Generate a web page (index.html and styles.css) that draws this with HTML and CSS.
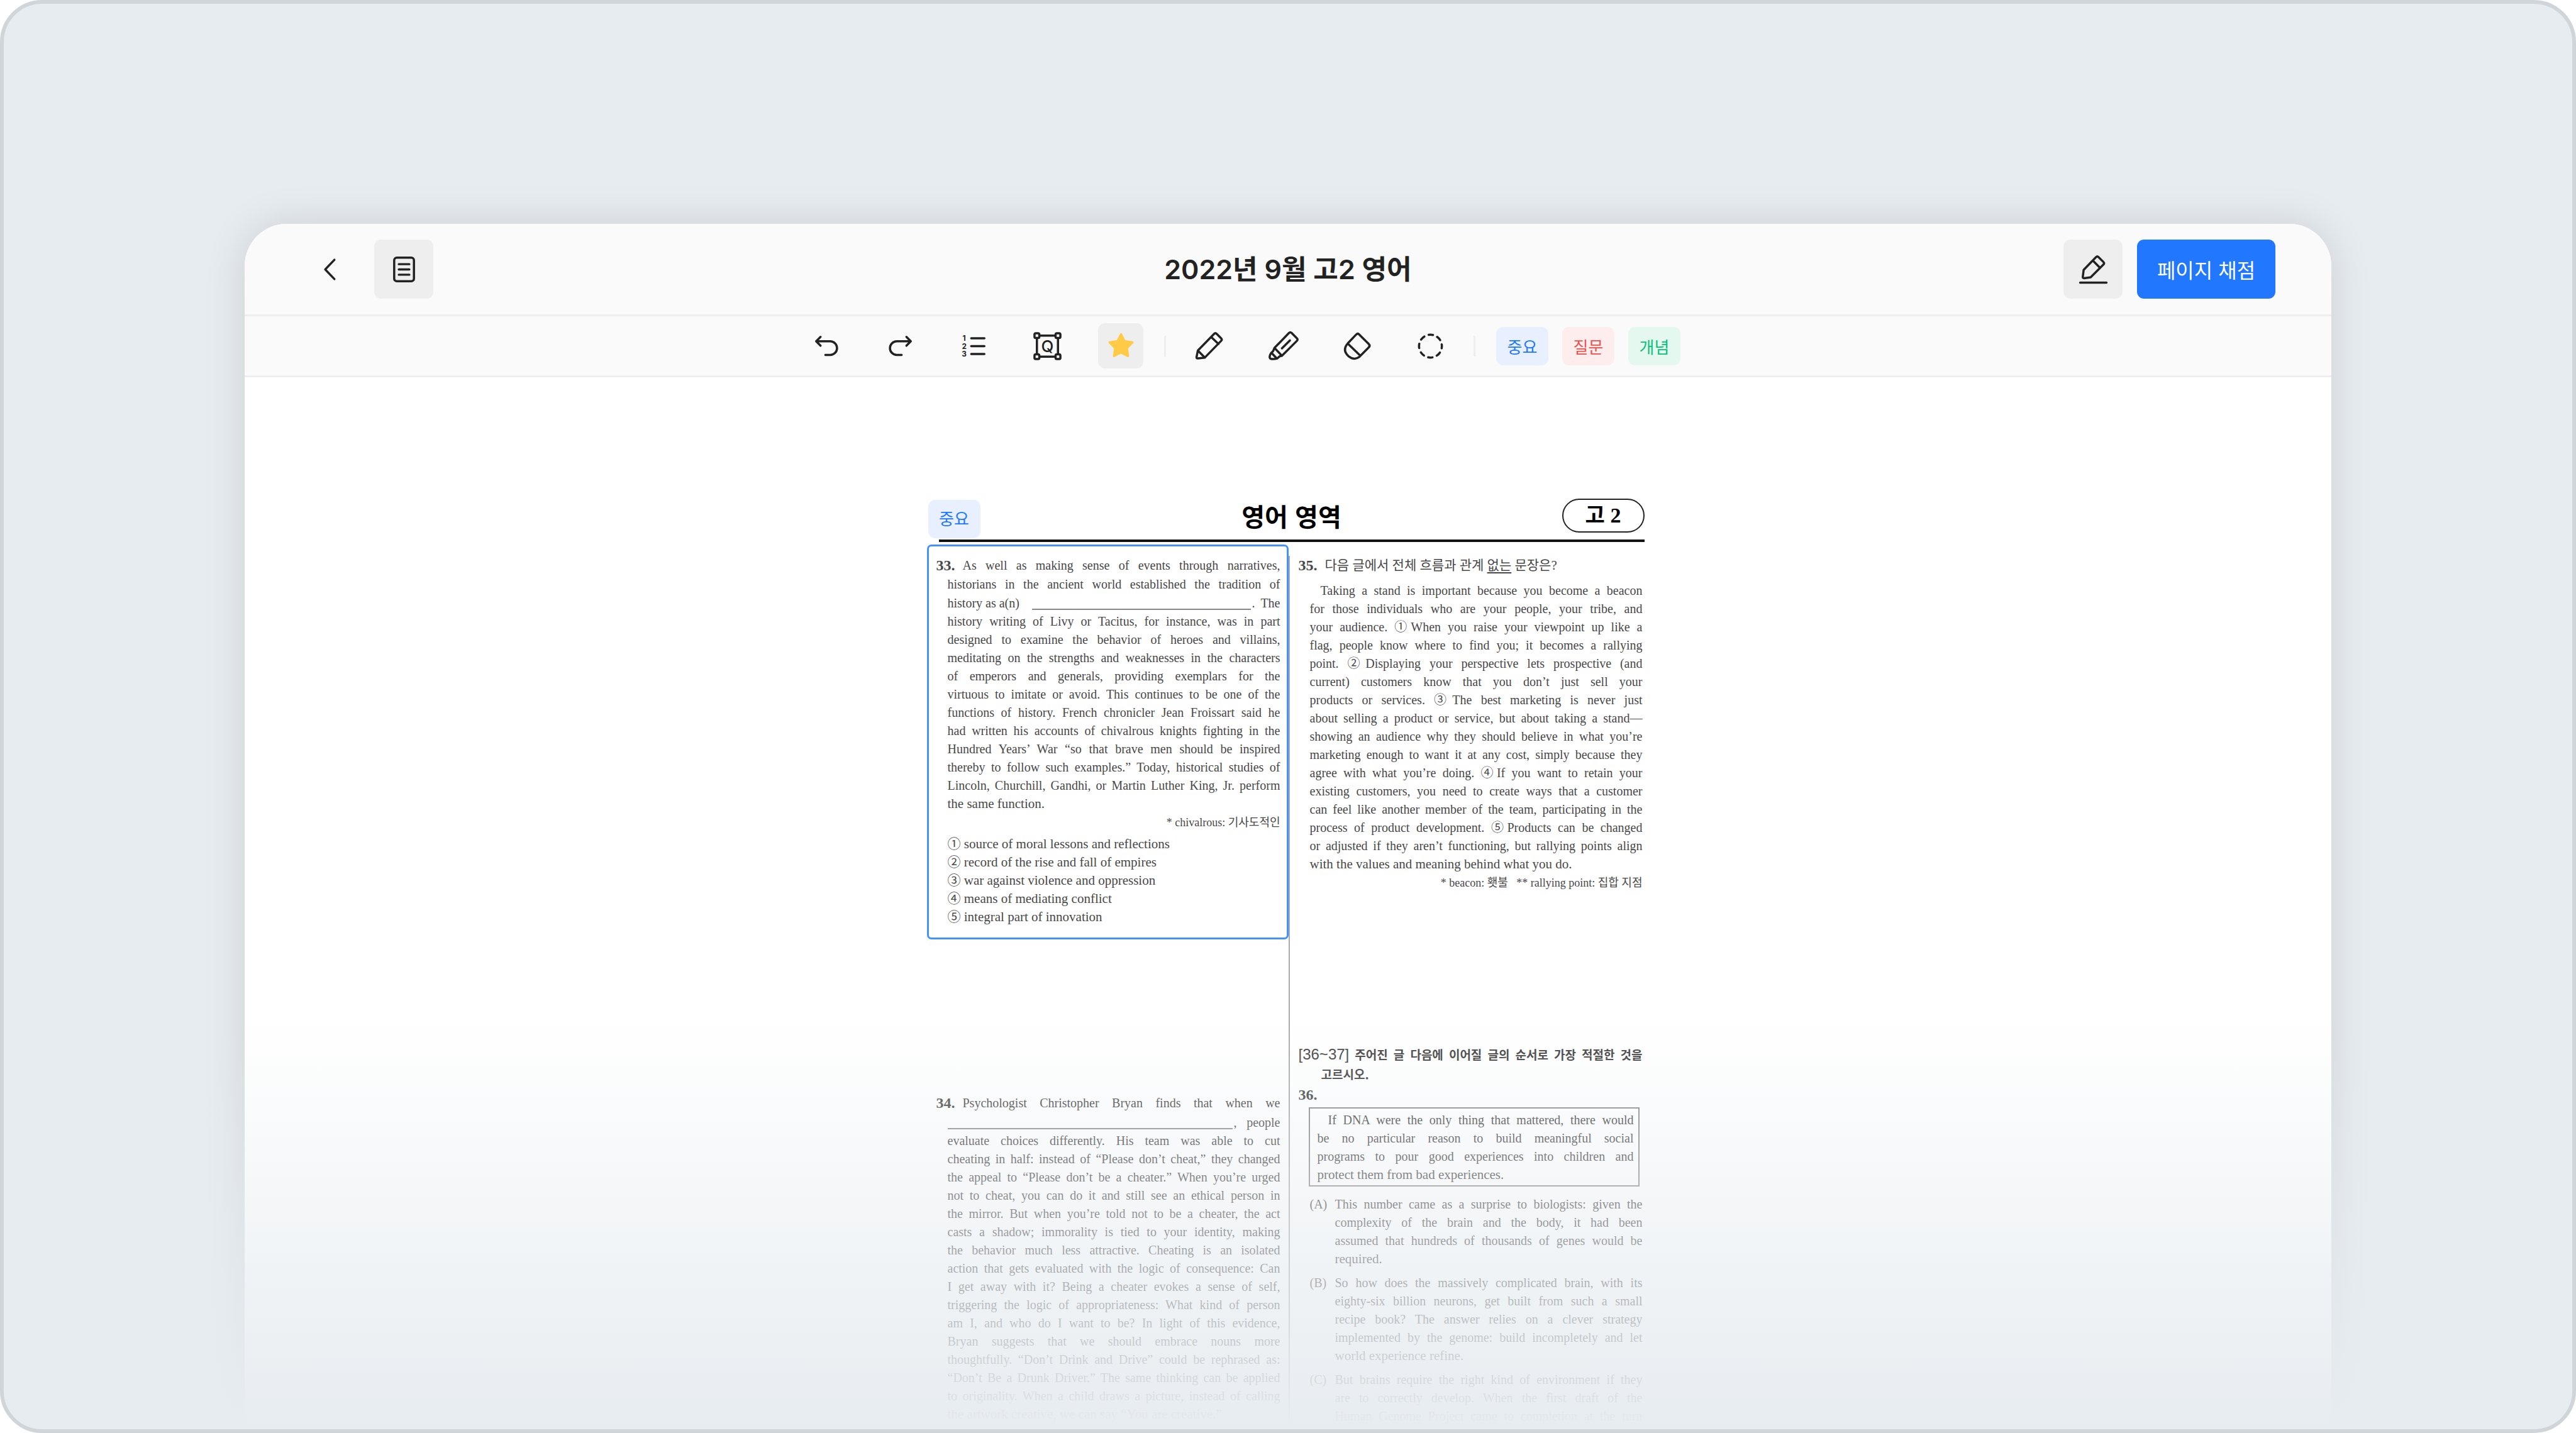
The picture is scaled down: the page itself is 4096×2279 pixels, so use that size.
FILE: index.html
```html
<!DOCTYPE html>
<html lang="ko">
<head>
<meta charset="utf-8">
<title>2022년 9월 고2 영어</title>
<link rel="stylesheet" href="styles.css">
</head>
<body>
<div class="frame">
  <main class="window">
    <header class="titlebar">
      <div class="side">
        <button class="square plain" type="button" aria-label="뒤로"><svg class="icon" viewBox="-48 -48 96 96"><path d="M9-22L-12 0L9 22"/></svg></button>
        <button class="square" type="button" aria-label="목록"><svg class="icon" viewBox="-48 -48 96 96"><rect x="-22.5" y="-27" width="45" height="54" rx="6"/><path d="M-12-12H12M-12 0H12M-12 12H12"/></svg></button>
      </div>
      <h1 class="title">2022년 9월 고2 영어</h1>
      <div class="side end">
        <button class="square" type="button" aria-label="필기"><svg class="icon" viewBox="-48 -48 96 96"><path d="M-22 1L6-28Q9-31 12-28L23-17Q26-14 23-11L-6 18L-21 20Q-24 20-24 17ZM-1-20L15-4M-30 30H30"/></svg></button>
        <button class="primary" type="button">페이지 채점</button>
      </div>
    </header>

    <nav class="toolbar" aria-label="도구">
      <div class="tools">
        <button class="tool" type="button" aria-label="실행 취소"><svg class="icon" viewBox="-48 -48 96 96"><path d="M-24-11H8a15.5 15.5 0 0 1 0 31H-3M-14-21L-24-11L-14-1"/></svg></button>
        <button class="tool" type="button" aria-label="다시 실행"><svg class="icon" viewBox="-48 -48 96 96"><path d="M24-11H-8a15.5 15.5 0 0 0 0 31H3M14-21L24-11L14-1"/></svg></button>
        <button class="tool" type="button" aria-label="번호 목록"><svg class="icon" viewBox="-48 -48 96 96"><path d="M-6-18H24M-6 0H24M-6 18H24"/><g class="digits"><text x="-22" y="-12">1</text><text x="-22" y="6">2</text><text x="-22" y="24">3</text></g></svg></button>
        <button class="tool" type="button" aria-label="문제 영역"><svg class="icon" viewBox="-48 -48 96 96"><path d="M-18-24H18M-18 24H18M-24-18V18M24-18V18"/><rect x="-29.5" y="-29.5" width="11" height="11" rx="3"/><rect x="18.5" y="-29.5" width="11" height="11" rx="3"/><rect x="-29.5" y="18.5" width="11" height="11" rx="3"/><rect x="18.5" y="18.5" width="11" height="11" rx="3"/><text class="letter" x="0" y="13">Q</text></svg></button>
        <button class="tool active" type="button" aria-label="별표"><svg class="icon star" viewBox="-48 -48 96 96"><path d="M0-27L8-11.500L26-8.500L13.500 4.500L16 22.500L0 14.500L-16 22.500L-13.500 4.500L-26-8.500L-8-11.500Z"/></svg></button>
      </div>
      <span class="divider"></span>
      <div class="tools">
        <button class="tool" type="button" aria-label="연필"><svg class="icon" viewBox="-48 -48 96 96"><path d="M-27 10L10-28Q13-31 16-28L26-18Q29-15 26-12L-11 26L-27 28Q-30 28-30 25ZM3-21L20-5M-27 10L-11 26"/></svg></button>
        <button class="tool" type="button" aria-label="형광펜"><svg class="icon" viewBox="-48 -48 96 96"><path d="M-20 4L13-30Q16-33 19-30L31-18Q34-15 31-12L-3 22L-8 23L-14 28Q-23 31-30 28Q-33 24-28 16L-23 11ZM-20 4L-3 22M-27 15L-15 28M15-13L-3 5"/></svg></button>
        <button class="tool" type="button" aria-label="지우개"><svg class="icon" viewBox="-48 -48 96 96"><path d="M-21-6L-1-27Q2-30 5-27L27-5Q31-1 27 3L5 25Q-6 33-19 23Q-34 9-21-6ZM-21-6L8 22"/></svg></button>
        <button class="tool" type="button" aria-label="올가미"><svg class="icon" viewBox="-48 -48 96 96"><circle r="26" stroke-dasharray="10 10.42" stroke-dashoffset="5"/></svg></button>
      </div>
      <span class="divider"></span>
      <div class="tags">
        <button class="tag blue" type="button">중요</button>
        <button class="tag red" type="button">질문</button>
        <button class="tag green" type="button">개념</button>
      </div>
    </nav>

    <section class="workspace">
      <div class="paper">
        <span class="tag blue pinned">중요</span>
        <header class="paper-head">
          <h2 class="subject">영어 영역</h2>
          <span class="grade">고 2</span>
        </header>
        <div class="columns">
          <div class="column">
            <article class="question selected">
              <div class="first"><b class="number">33.</b><span class="line">As well as making sense of events through narratives,</span></div>
              <p class="passage">
                <span class="line">historians in the ancient world established the tradition of</span>
                <span class="fill"><span>history as a(n)</span><i class="blank"></i><span class="line tail">. The</span></span>
                <span class="line">history writing of Livy or Tacitus, for instance, was in part</span>
                <span class="line">designed to examine the behavior of heroes and villains,</span>
                <span class="line">meditating on the strengths and weaknesses in the characters</span>
                <span class="line">of emperors and generals, providing exemplars for the</span>
                <span class="line">virtuous to imitate or avoid. This continues to be one of the</span>
                <span class="line">functions of history. French chronicler Jean Froissart said he</span>
                <span class="line">had written his accounts of chivalrous knights fighting in the</span>
                <span class="line">Hundred Years’ War “so that brave men should be inspired</span>
                <span class="line">thereby to follow such examples.” Today, historical studies of</span>
                <span class="line">Lincoln, Churchill, Gandhi, or Martin Luther King, Jr. perform</span>
                <span class="last">the same function.</span>
              </p>
              <p class="note">* chivalrous: 기사도적인</p>
              <ul class="choices">
                <li>① source of moral lessons and reflections</li>
                <li>② record of the rise and fall of empires</li>
                <li>③ war against violence and oppression</li>
                <li>④ means of mediating conflict</li>
                <li>⑤ integral part of innovation</li>
              </ul>
            </article>
            <article class="question">
              <div class="first"><b class="number">34.</b><span class="line">Psychologist Christopher Bryan finds that when we</span></div>
              <p class="passage">
                <span class="fill"><i class="blank"></i><span class="line tail wide">, people</span></span>
                <span class="line">evaluate choices differently. His team was able to cut</span>
                <span class="line">cheating in half: instead of “Please don’t cheat,” they changed</span>
                <span class="line">the appeal to “Please don’t be a cheater.” When you’re urged</span>
                <span class="line">not to cheat, you can do it and still see an ethical person in</span>
                <span class="line">the mirror. But when you’re told not to be a cheater, the act</span>
                <span class="line">casts a shadow; immorality is tied to your identity, making</span>
                <span class="line">the behavior much less attractive. Cheating is an isolated</span>
                <span class="line">action that gets evaluated with the logic of consequence: Can</span>
                <span class="line">I get away with it? Being a cheater evokes a sense of self,</span>
                <span class="line">triggering the logic of appropriateness: What kind of person</span>
                <span class="line">am I, and who do I want to be? In light of this evidence,</span>
                <span class="line">Bryan suggests that we should embrace nouns more</span>
                <span class="line">thoughtfully. “Don’t Drink and Drive” could be rephrased as:</span>
                <span class="line">“Don’t Be a Drunk Driver.” The same thinking can be applied</span>
                <span class="line">to originality. When a child draws a picture, instead of calling</span>
                <span class="last">the artwork creative, we can say “You are creative.”</span>
              </p>
            </article>
          </div>

          <div class="column right">
            <article class="item">
              <div class="first"><b class="number">35.</b><span class="prompt">다음 글에서 전체 흐름과 관계 <u>없는</u> 문장은?</span></div>
              <p class="passage spaced">
                <span class="line indent">Taking a stand is important because you become a beacon</span>
                <span class="line">for those individuals who are your people, your tribe, and</span>
                <span class="line">your audience. ①When you raise your viewpoint up like a</span>
                <span class="line">flag, people know where to find you; it becomes a rallying</span>
                <span class="line">point. ②Displaying your perspective lets prospective (and</span>
                <span class="line">current) customers know that you don’t just sell your</span>
                <span class="line">products or services. ③The best marketing is never just</span>
                <span class="line">about selling a product or service, but about taking a stand—</span>
                <span class="line">showing an audience why they should believe in what you’re</span>
                <span class="line">marketing enough to want it at any cost, simply because they</span>
                <span class="line">agree with what you’re doing. ④If you want to retain your</span>
                <span class="line">existing customers, you need to create ways that a customer</span>
                <span class="line">can feel like another member of the team, participating in the</span>
                <span class="line">process of product development. ⑤Products can be changed</span>
                <span class="line">or adjusted if they aren’t functioning, but rallying points align</span>
                <span class="last">with the values and meaning behind what you do.</span>
              </p>
              <p class="note">* beacon: 횃불 &nbsp; ** rallying point: 집합 지점</p>
            </article>
            <article class="item">
              <h3 class="range"><span class="line"><span class="span">[36~37]</span> 주어진 글 다음에 이어질 글의 순서로 가장 적절한 것을</span><span class="range-end">고르시오.</span></h3>
              <div class="first solo"><b class="number">36.</b></div>
              <p class="given">
                <span class="line indent">If DNA were the only thing that mattered, there would</span>
                <span class="line">be no particular reason to build meaningful social</span>
                <span class="line">programs to pour good experiences into children and</span>
                <span class="last">protect them from bad experiences.</span>
              </p>
              <dl class="parts">
                <dt>(A)</dt>
                <dd>
                  <span class="line">This number came as a surprise to biologists: given the</span>
                  <span class="line">complexity of the brain and the body, it had been</span>
                  <span class="line">assumed that hundreds of thousands of genes would be</span>
                  <span class="last">required.</span>
                </dd>
                <dt>(B)</dt>
                <dd>
                  <span class="line">So how does the massively complicated brain, with its</span>
                  <span class="line">eighty-six billion neurons, get built from such a small</span>
                  <span class="line">recipe book? The answer relies on a clever strategy</span>
                  <span class="line">implemented by the genome: build incompletely and let</span>
                  <span class="last">world experience refine.</span>
                </dd>
                <dt>(C)</dt>
                <dd>
                  <span class="line">But brains require the right kind of environment if they</span>
                  <span class="line">are to correctly develop. When the first draft of the</span>
                  <span class="line">Human Genome Project came to completion at the turn</span>
                </dd>
              </dl>
            </article>
          </div>
        </div>
      </div>
    </section>
  </main>
  <div class="fade"></div>
</div>
</body>
</html>
```
FILE: styles.css
```css
* { box-sizing: border-box; margin: 0; padding: 0; }

:root {
  --ink: #222;
  --backdrop: #e7ecf0;
  --bar: #fafafa;
  --soft: #eee;
  --blue: #2178ff;
}

body {
  background: #fff;
  color: var(--ink);
  font-family: Inter, "Noto Sans CJK KR", sans-serif;
}

button { border: 0; font: inherit; color: inherit; background: none; }

.frame {
  position: relative;
  display: flex;
  flex-direction: column;
  min-height: 100vh;
  padding-top: 350px;
  overflow: hidden;
  border: 6px solid #cfd5d8;
  border-radius: 67px;
  background: var(--backdrop);
}

.window {
  flex: 1;
  display: flex;
  flex-direction: column;
  width: 100%;
  max-width: 3318px;
  margin: 0 auto;
  border-radius: 67px 67px 0 0;
  background: #fff;
  box-shadow: 0 0 67px rgba(0, 0, 0, 0.12);
}

.titlebar {
  display: grid;
  grid-template-columns: 1fr auto 1fr;
  align-items: center;
  padding: 25px 89px;
  border-bottom: 3px solid var(--soft);
  border-radius: 67px 67px 0 0;
  background: var(--bar);
}

.side { display: flex; gap: 23px; }
.side.end { justify-content: flex-end; }

.title { font-size: 43px; line-height: 56px; font-weight: 600; }

.square {
  display: grid;
  place-items: center;
  width: 94px;
  height: 94px;
  border-radius: 11px;
  background: var(--soft);
}
.square.plain { background: none; }

.primary {
  height: 94px;
  width: 220px;
  border-radius: 11px;
  background: var(--blue);
  color: #fff;
  font-size: 32px;
  font-weight: 400;
}

.icon {
  display: block;
  width: 67px;
  height: 67px;
  fill: none;
  stroke: var(--ink);
  stroke-width: 5px;
  stroke-linecap: round;
  stroke-linejoin: round;
}
.icon text { fill: var(--ink); stroke: none; text-anchor: middle; }
.digits { font-size: 17px; font-weight: 700; }
.letter { font-size: 37px; font-weight: 500; }
.star { fill: #ffcb47; stroke: #ffcb47; }

.toolbar {
  display: flex;
  align-items: center;
  justify-content: center;
  gap: 33px;
  padding: 11px 146px 11px 0;
  border-bottom: 3px solid var(--soft);
  background: var(--bar);
}

.tools { display: flex; gap: 45px; }

.tool {
  display: grid;
  place-items: center;
  width: 72px;
  height: 72px;
  border-radius: 11px;
}
.tool.active { background: var(--soft); }

.divider { width: 3px; height: 33px; background: var(--soft); }

.tags { display: flex; gap: 22px; }

.tag {
  display: grid;
  place-items: center;
  width: 83px;
  height: 61px;
  border-radius: 11px;
  font-size: 26px;
  font-weight: 400;
}
.blue { background: #e8f0ff; color: var(--blue); }
.red { background: #fdeeed; color: #f04f4c; }
.green { background: #e4f8ef; color: #08c17a; }

.workspace {
  flex: 1;
  display: flex;
  justify-content: center;
  padding: 193px 8px 0 0;
}

.paper {
  position: relative;
  display: flex;
  flex-direction: column;
  width: 1141px;
  font: 20px/29px "Liberation Serif", "Noto Sans CJK KR", serif;
  color: #484848;
}

.pinned {
  position: absolute;
  top: 2px;
  left: 2px;
  font-family: Inter, "Noto Sans CJK KR", sans-serif;
}

.paper-head {
  display: grid;
  grid-template-columns: 1fr auto 1fr;
  align-items: center;
  margin-left: 19px;
  padding-bottom: 11px;
  border-bottom: 4px solid #111;
  color: #000;
}

.subject {
  grid-column: 2;
  font: 700 40px/54px "Noto Sans CJK KR", sans-serif;
}

.grade {
  justify-self: end;
  width: 131px;
  height: 54px;
  border: 2px solid #222;
  border-radius: 27px;
  font-size: 34px;
  line-height: 50px;
  font-weight: 700;
  text-align: center;
}

.columns {
  flex: 1;
  display: grid;
  grid-template-columns: 575px 1fr;
}

.column { display: flex; flex-direction: column; gap: 245px; padding-top: 4px; }

.column.right {
  gap: 242px;
  margin-top: 22px;
  padding: 0 3px 0 14px;
  border-left: 2px solid #aaa;
}

.question { padding: 0 13px 0 15px; }
.question.selected {
  padding: 15px 10px 18px 12px;
  border: 3px solid #4592ff;
  border-radius: 7px;
}

.first { display: flex; line-height: 31px; }
.number { flex: none; width: 42px; font-size: 24px; }
.first .line { flex: 1; }
.first.solo { margin-top: 3px; }

.passage { padding-left: 18px; }
.passage.spaced { margin-top: 10px; }

.line { display: block; white-space: nowrap; text-align-last: justify; }
.last { display: block; font-size: 21px; }
.indent { padding-left: 17px; }

.fill { display: flex; line-height: 30px; }
.blank { flex: 1; height: 26px; border-bottom: 2px solid #888; }
.fill span + .blank { margin-left: 20px; }
.tail { width: 47px; padding-left: 2px; }
.tail.wide { width: 76px; }

.note { margin-top: 1px; font-size: 18px; text-align: right; }

.choices { margin-top: 5px; padding-left: 18px; list-style: none; font-size: 21px; }

.prompt { font-size: 21px; }
.prompt u { text-underline-offset: 4px; }

.range {
  font: 700 19px/31px "Noto Sans CJK KR", sans-serif;
  color: #444;
}
.span { font: 24px/31px "Liberation Sans", sans-serif; }
.range-end { display: block; padding-left: 36px; }

.given {
  margin: 4px 5px 0 16px;
  padding: 4px 7px 2px 12px;
  border: 2px solid #888;
}

.parts {
  display: grid;
  grid-template-columns: 40px 1fr;
  row-gap: 9px;
  margin-top: 14px;
  padding-left: 18px;
}

.fade {
  position: absolute;
  right: 0;
  bottom: 0;
  left: 0;
  height: 653px;
  background: linear-gradient(rgba(231, 236, 240, 0), var(--backdrop));
  pointer-events: none;
}
```
